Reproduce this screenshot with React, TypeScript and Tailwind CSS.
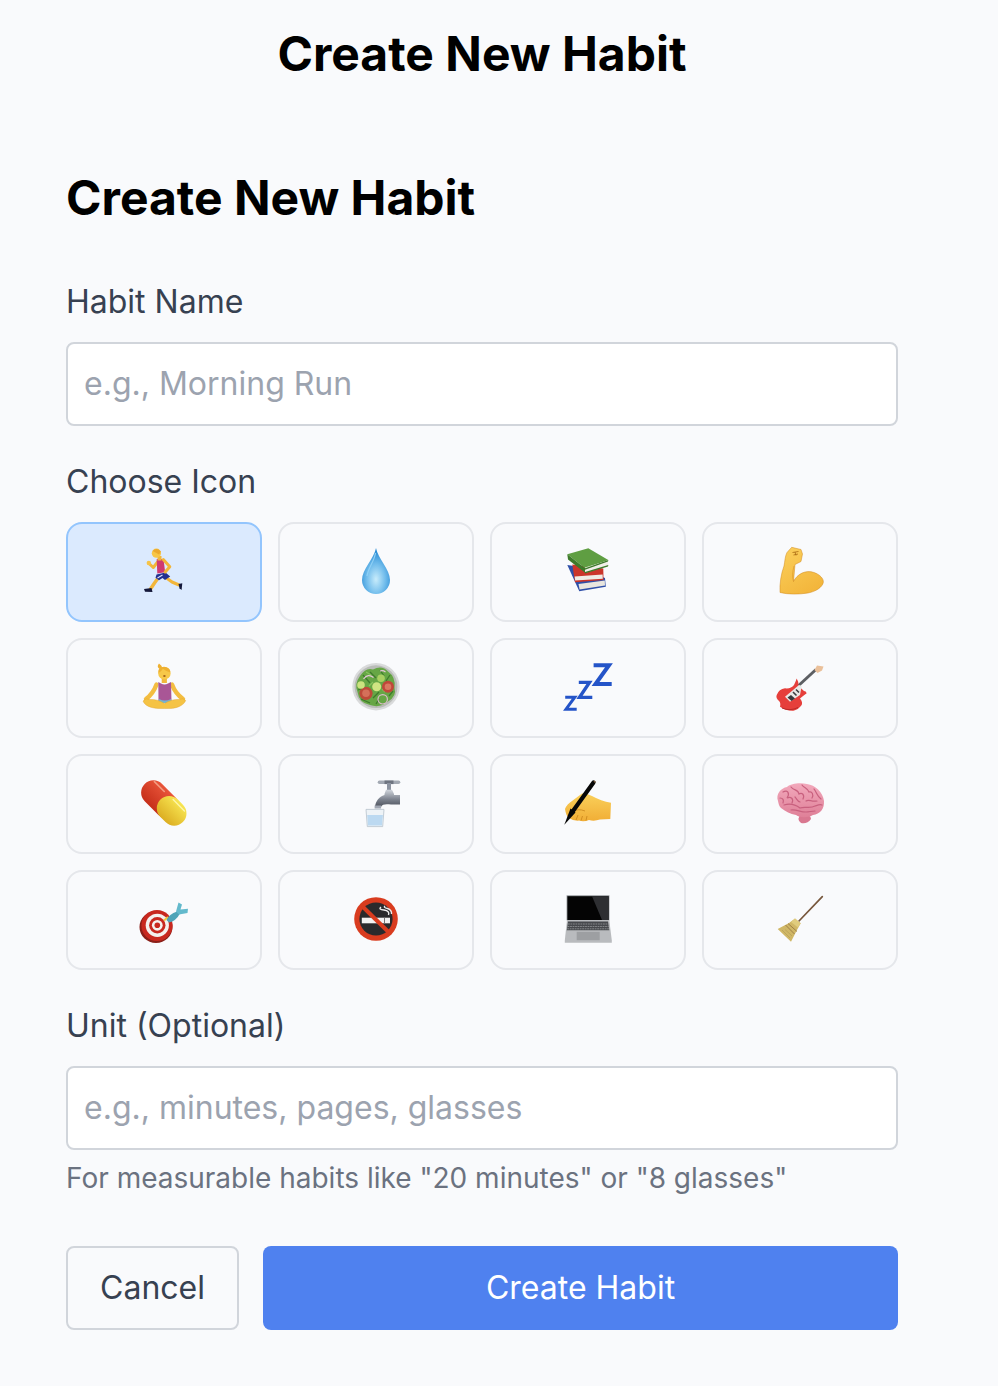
import type { ReactNode } from "react";

const Runner = (
  <>
    <path d="M24 19.5 L19.3 25.5 L15 21.5" fill="none" stroke="#f2b63a" strokeWidth="3" strokeLinecap="round" strokeLinejoin="round" />
    <circle cx="14.8" cy="21" r="2.2" fill="#f6c449" />
    <path d="M24.5 35.5 L20.5 41 L16.5 47" fill="none" stroke="#f2b63a" strokeWidth="3.4" strokeLinecap="round" strokeLinejoin="round" />
    <path d="M32.5 36 L38 40 L45 43" fill="none" stroke="#f2b63a" strokeWidth="3" strokeLinecap="round" strokeLinejoin="round" />
    <path d="M10 47 L17.5 46 L18.5 50 L11 49.8 Z" fill="#14183a" />
    <path d="M44.5 42 L48.3 41.2 L47.6 48 L45.5 46.2 Z" fill="#14183a" />
    <path d="M22.7 17 L29.5 17 L31.2 30.3 L23.3 31.5 Z" fill="#cf3a70" />
    <path d="M22.5 32.5 L31.5 30.5 L36.2 34.6 L31 38 L28.5 36 L25 38.2 L21.5 35.8 Z" fill="#23308f" />
    <path d="M23.5 36 L28.5 33" stroke="#dfe6ff" strokeWidth="1.1" />
    <path d="M29.3 17.5 L35.8 24.7 L31.2 30" fill="none" stroke="#f2b63a" strokeWidth="3" strokeLinecap="round" strokeLinejoin="round" />
    <rect x="23.5" y="14" width="4" height="4.5" fill="#f2b63a" />
    <circle cx="22.4" cy="11.2" r="4.6" fill="#f7c646" />
    <path d="M18.5 9 Q22.5 5 27 9.5 L25 12.5 L21.5 10.5 Z" fill="#eba92d" />
  </>
);

const Drop = (
  <>
    <defs>
      <radialGradient id="dropFill" cx="50%" cy="68%" r="60%">
        <stop offset="0%" stopColor="#c8ecfb" />
        <stop offset="55%" stopColor="#72bdec" />
        <stop offset="100%" stopColor="#2f8fd6" />
      </radialGradient>
    </defs>
    <path d="M30 6 C32 17 44 27 44 38 A14 14 0 0 1 16 38 C16 27 28 17 30 6 Z" fill="url(#dropFill)" />
    <path d="M29.5 11 C28.5 19 22 26 21 34" fill="none" stroke="#8fd0f5" strokeWidth="1.2" />
  </>
);

const Books = (
  <>
    <path d="M9.3 23 L16 24 L47 36 L47.8 44.8 L21.3 49.3 Z" fill="#2f4fa8" />
    <path d="M20.5 42 L46.8 38.5 L47 43.6 L21.6 47.4 Z" fill="#e9e6df" />
    <path d="M14.3 22.5 L45.3 26.5 L45.5 38 L17 40.2 Z" fill="#cb352a" />
    <path d="M16.6 34.5 L44.6 32.5 L44.8 36.8 L17.2 38.6 Z" fill="#efece5" />
    <path d="M9.3 12.3 L30.3 6.3 L50.3 18 L27 26.3 Z" fill="#5f9e42" />
    <path d="M27 25.5 L50 18.5 L50.3 23.7 L27 31 Z" fill="#f1efe8" />
    <path d="M9.3 12.3 L27 26.3 L27 30.8 L10 17.5 Z" fill="#3d7a2a" />
    <path d="M27 26.3 L50.3 18 L50 19.5 L27 27.8 Z" fill="#3d7a2a" />
    <path d="M27 30 L50.3 23 L50 24.5 L27 31.4 Z" fill="#3d7a2a" />
  </>
);

const Bicep = (
  <>
    <defs>
      <linearGradient id="armFill" x1="0" y1="0" x2="0.6" y2="1">
        <stop offset="0%" stopColor="#fbd05c" />
        <stop offset="100%" stopColor="#f3b63c" />
      </linearGradient>
    </defs>
    <path
      d="M21.7 5.3 L31 7.5 L32.5 12 L31 19.5 L25 22.5 L23.5 39.5 C27 32 36 27.5 44 30.5 C50 32.5 54 37 53.3 40.5 C52.5 45 46 49.5 38 51 C29 52.5 18 52.5 10 50.5 C9.5 42 11 32 14 24 C15 19 15 14 17 10.5 Z"
      fill="url(#armFill)"
      stroke="#d0881c"
      strokeWidth="0.5"
    />
    <path d="M22.5 10.5 L28.5 9.5 M23.5 13 L28 12 M25 10 L26 13.5" stroke="#a96a12" strokeWidth="0.8" fill="none" />
    <path d="M24 24 Q21.5 33 23.5 39.5" fill="none" stroke="#dc9a28" strokeWidth="0.7" />
  </>
);

const Meditate = (
  <>
    <path d="M22.5 26.5 C20.5 32 17.5 37 12 41" fill="none" stroke="#f3bd41" strokeWidth="4.4" strokeLinecap="round" />
    <path d="M38 26.5 C40 32 43.5 37 49 41" fill="none" stroke="#f3bd41" strokeWidth="4.4" strokeLinecap="round" />
    <path d="M24.3 24 L27 25.5 Q30.5 27.5 34 25.5 L37 24 L37.5 43.5 L24.5 43.5 Z" fill="#a95696" />
    <path d="M25 41 Q31 44 37 41 L38 45 L24 45 Z" fill="#74b6d0" />
    <path d="M9 43 Q12 39.5 16 41.5 C20 41 26 42.5 30.5 45.5 C35 42.5 41 41 45 41.5 Q49 39.5 51.7 42.5 C50 47 44 50 37 50.4 C33 50.6 28 50.6 24 50.4 C17 50 11 48 9 43 Z" fill="#f5c345" stroke="#dd9f28" strokeWidth="0.4" />
    <rect x="27.7" y="18" width="5.2" height="7" fill="#f0b83c" />
    <circle cx="30.4" cy="15.4" r="6.2" fill="#f7c849" />
    <path d="M24.4 15 Q23.6 8.8 30 8.8 Q36.4 9.2 36.4 14.5 Q31.5 13 28.8 10.8 Q27.5 13.8 24.4 15 Z" fill="#eeb031" />
    <path d="M26 11 Q22 9 25 5.5 Q28 7.5 28 10 Z" fill="#eeb031" />
    <ellipse cx="30.4" cy="18" rx="1.3" ry="1.1" fill="#a5651c" />
  </>
);

const Salad = (
  <>
    <circle cx="30" cy="28.7" r="23.7" fill="#d9dadb" />
    <circle cx="30" cy="28.7" r="21.4" fill="#b9bcb8" />
    <path d="M14 18 Q20 9 27 11.5 Q36 6.5 42 13.5 Q50 19 48.5 30 Q51 38 42 43.5 Q34 50.5 24 47 Q13 45 11.5 34 Q8 26 14 18 Z" fill="#66a645" />
    <path d="M17 17 L24 25 M34 12 L38 18 M15 41 L24 45 M43 38 L47 33 M27 40 L33 34 M30 20 L24 14 M12 32 L17 30 M44 17 L40 23 M30 46 L33 41" stroke="#3e7a2d" strokeWidth="1.3" />
    <path d="M20 14 L25 17 M39 34 L36 31 M27 24 L23 28" stroke="#88c45f" strokeWidth="1.2" />
    <circle cx="20" cy="35.3" r="6.6" fill="#bd4a39" />
    <circle cx="20" cy="35.3" r="3.8" fill="#d4705a" />
    <circle cx="42" cy="28.7" r="6" fill="#c0483a" />
    <circle cx="42" cy="28.7" r="3.3" fill="#da7860" />
    <circle cx="15" cy="27" r="3.8" fill="#cbe27f" />
    <circle cx="30.7" cy="28.7" r="4.5" fill="#d0e583" />
    <circle cx="35" cy="20.3" r="3.8" fill="#a8cf62" />
    <circle cx="36.7" cy="41.3" r="4.7" fill="none" stroke="#dbbccb" strokeWidth="1.2" />
    <path d="M17.5 21 Q22 15 27.5 19.5" fill="none" stroke="#e4c6d6" strokeWidth="1.2" />
    <path d="M34 13 Q37 12 39.5 14" fill="none" stroke="#e4c6d6" strokeWidth="1.1" />
  </>
);

const Zzz = (
  <g fill="none" stroke="#2454c8" strokeWidth="4" strokeLinejoin="miter">
    <path d="M35.6 7.2 H51 L37.5 26 H53.7" />
    <path d="M20.8 24.4 H31.5 L21.5 39.4 H34.3" strokeWidth="3.4" />
    <path d="M7.2 39.2 H16.8 L8 51.2 H18.7" strokeWidth="3" />
  </g>
);

const Guitar = (
  <>
    <path d="M27 29 L46 11.5" stroke="#5d5f63" strokeWidth="3" />
    <path d="M44.5 12 L47 7.5 L53.5 8.5 L52 12.5 L47.5 15 Z" fill="#eac09a" />
    <path d="M26.7 20.5 Q29 24 28.5 28 L34 33 Q36 33 36.7 35.3 Q33 38 30 40.5 Q33 44 31.7 47 Q28 52 23.3 52.7 Q16 53 10 48.7 Q11 45 9 43 Q5.5 40 6.7 37 Q9 31 15 30.3 Q21 31 24 27 Q25.5 24 26.7 20.5 Z" fill="#e63f3b" />
    <path d="M15 38.7 L29 27 L31.7 28 L30 37 L20 43.7 Z" fill="#e9e9e6" />
    <path d="M17.5 39.5 L21.5 43 L25 40.5 L21 37 Z" fill="#38393c" />
    <path d="M23 34 L26.5 37.5 M26 31.5 L29 34.5" stroke="#3c3d40" strokeWidth="1.6" />
    <path d="M12 50 Q20 53.5 28 49.5" fill="none" stroke="#b92a28" strokeWidth="1" />
  </>
);

const Pill = (
  <>
    <defs>
      <linearGradient id="pillRed" x1="0" y1="0" x2="0" y2="1">
        <stop offset="0%" stopColor="#e9553a" />
        <stop offset="100%" stopColor="#c62f1a" />
      </linearGradient>
      <linearGradient id="pillYellow" x1="0" y1="0" x2="0" y2="1">
        <stop offset="0%" stopColor="#f8e652" />
        <stop offset="100%" stopColor="#dcae22" />
      </linearGradient>
    </defs>
    <g transform="rotate(45 29.8 29)">
      <rect x="2.8" y="16.7" width="44" height="24.6" rx="12.3" fill="url(#pillRed)" />
      <rect x="25" y="16.7" width="31.8" height="24.6" rx="12.3" fill="url(#pillYellow)" />
      <path d="M8 20.5 H22" stroke="#f29a80" strokeWidth="1.6" strokeLinecap="round" />
      <path d="M34 20 H50" stroke="#fdf6a8" strokeWidth="1.4" strokeLinecap="round" />
    </g>
  </>
);

const Faucet = (
  <>
    <defs>
      <linearGradient id="tapFill" x1="0" y1="0" x2="0" y2="1">
        <stop offset="0%" stopColor="#d0d5dc" />
        <stop offset="55%" stopColor="#7d838f" />
        <stop offset="100%" stopColor="#4d525c" />
      </linearGradient>
    </defs>
    <path d="M33.5 8.3 H52.5" stroke="#a3a9b3" strokeWidth="3.6" strokeLinecap="round" />
    <path d="M38.5 8.3 H47.5" stroke="#6e7480" strokeWidth="3.6" />
    <rect x="41" y="9" width="4" height="7.5" fill="#8c93a0" />
    <path d="M38.5 20 L40 15.8 H46 L48 20 V21 H54 V30.5 H45 C40 30 36 30 35 33 H29 C29.5 27.5 33 22.5 38.5 21 Z" fill="url(#tapFill)" />
    <rect x="28.6" y="31.5" width="6.5" height="3" fill="#a0a6b2" />
    <path d="M20 35.4 H38 L36.7 52.6 H21.3 Z" fill="#eef3f7" stroke="#b6c1cc" strokeWidth="0.8" />
    <path d="M21.2 41 H36.9 L36 51.6 H22 Z" fill="#bcd9f1" />
  </>
);

const WritingHand = (
  <>
    <defs>
      <linearGradient id="handFill" x1="0" y1="0" x2="0" y2="1">
        <stop offset="0%" stopColor="#fad05a" />
        <stop offset="100%" stopColor="#f1ae36" />
      </linearGradient>
    </defs>
    <path d="M7 35 Q9 30 14 27 L24 19.5 Q29 19 34 22 Q43 27 53 28.7 L52.3 45 Q47 45 42 45.6 Q36 47.5 31 46 Q26 48 21 46.6 Q15 47 11 44 Q8 42 7 35 Z" fill="url(#handFill)" />
    <path d="M14 38 Q20 34 27 37 M18 46 L20 41 M23 46.5 L24.5 42 M28 46.5 L29 42" fill="none" stroke="#c9851a" strokeWidth="0.8" />
    <path d="M35.5 8.5 L15 37" stroke="#070707" strokeWidth="4.2" strokeLinecap="round" />
    <path d="M12.5 34.5 L17.5 38.5 L6.3 50.7 Z" fill="#070707" />
    <path d="M36 7 L37.5 8.5" stroke="#7b5b3a" strokeWidth="1.4" />
  </>
);

const Brain = (
  <>
    <defs>
      <linearGradient id="brainFill" x1="0" y1="0" x2="0" y2="1">
        <stop offset="0%" stopColor="#f2a9bc" />
        <stop offset="100%" stopColor="#df8098" />
      </linearGradient>
    </defs>
    <path d="M31 40 Q41 40 41 45 Q37 50.5 31 49 Q26 45 31 40 Z" fill="#d97790" />
    <path d="M8 27 C5.5 20 11 14 17 13 C21 9 31 8.5 37 10 C45 11 53 18 54 27 C54.5 35 50 40 43 41 C38 44 30 44 26 41 C20 40 16 37.5 11 34 C9 32 8.5 29.5 8 27 Z" fill="url(#brainFill)" />
    <g fill="none" stroke="#c8607e" strokeWidth="1.2" strokeLinecap="round">
      <path d="M13 18 C18 15 20 20 17 24 C21 22 24 25 22 29" />
      <path d="M21 13 C24 17 28 15 29 20 C32 18 35 21 33 25" />
      <path d="M32 11 C34 14 38 14 39 18 C42 17 44 21 42 24" />
      <path d="M44 15 C47 19 47 22 51 25" />
      <path d="M14 31 C20 29 26 31 30 34 C35 32 40 35 45 32 C48 31 50 30 52 31" />
      <path d="M21 36 C26 35 30 38 36 38 C39 38 42 37 45 37" />
      <path d="M10 24 C13 24 14 26 13 29" />
      <path d="M36 27 C39 25 41 28 47 27" />
      <path d="M25 23 C27 25 27 27 30 28" />
    </g>
  </>
);

const Target = (
  <>
    <ellipse cx="22" cy="37" rx="16.5" ry="16" fill="#8a1f18" />
    <circle cx="23" cy="35.5" r="15.6" fill="#c8281f" />
    <circle cx="23.3" cy="35.3" r="11.6" fill="#f4f1ee" />
    <circle cx="23.3" cy="35.3" r="8.2" fill="#c8281f" />
    <circle cx="23.3" cy="35.3" r="5.4" fill="#f4f1ee" />
    <circle cx="23.3" cy="35.3" r="2.8" fill="#c8281f" />
    <path d="M30 30.5 L34 27" stroke="#f0c93c" strokeWidth="2" />
    <path d="M32.5 30 Q35 24 43 21.5 L46 23.5 Q42 31 35 32.5 Z" fill="#4ea4b8" />
    <path d="M42 21.5 L44.5 12.5 L48 14.5 L46.5 19.5 L54 18.8 L53.5 23 L45 24.5 Z" fill="#63b9cc" />
  </>
);

const NoSmoking = (
  <>
    <circle cx="30" cy="29" r="21.8" fill="#d93c1f" />
    <circle cx="30" cy="29" r="16.6" fill="#2a2a2c" />
    <rect x="15.8" y="27.7" width="28.2" height="5.6" fill="#f2f2f2" />
    <rect x="38" y="27.7" width="1" height="5.6" fill="#777" />
    <path d="M35 17 Q32 19.5 38 20 Q44 21 42.5 25 M39 16 Q37 17.5 41.5 18.5 Q46 20 45.5 24" fill="none" stroke="#ededed" strokeWidth="1.4" />
    <path d="M16 16 L43.5 43" stroke="#d93c1f" strokeWidth="4" />
  </>
);

const Laptop = (
  <>
    <rect x="8.6" y="5.3" width="42.8" height="25" fill="#8f9296" />
    <rect x="9.4" y="6.2" width="41.2" height="24" fill="#040404" />
    <path d="M34 6.2 H50.6 V30 H44 Z" fill="#2e2f32" />
    <path d="M9 30 H51.3 L53.8 50.5 V52.7 H6.8 V50.5 Z" fill="#b9bbbe" />
    <path d="M10 31.5 H50 L51.3 40.2 H8.8 Z" fill="#47494d" />
    <path d="M10 34 H50.3 M9.6 36.5 H50.7 M9.2 38.8 H51" stroke="#c0c2c5" strokeWidth="0.5" strokeDasharray="1.8 0.7" />
    <rect x="18.7" y="41.8" width="23" height="8.4" fill="#9d9fa2" />
  </>
);

const Broom = (
  <>
    <path d="M52.3 6.7 L29 31" stroke="#77573c" strokeWidth="1.7" strokeLinecap="round" />
    <path d="M25 28.5 L30.7 33.2 L27.5 39 L21 51.7 L7.7 39 L19 33 Z" fill="#d0b766" />
    <path d="M25 28.5 L30.7 33.2 L28 37.5 L21 32 Z" fill="#e0cc7e" />
    <path d="M18 33.5 L27 41.5 M15.5 35 L24.5 44" stroke="#a08048" strokeWidth="1" />
    <path d="M12 40 L20 48 M15 39.5 L22 46" stroke="#a89250" strokeWidth="0.5" />
  </>
);

const icons: ReactNode[] = [
  Runner, Drop, Books, Bicep,
  Meditate, Salad, Zzz, Guitar,
  Pill, Faucet, WritingHand, Brain,
  Target, NoSmoking, Laptop, Broom,
];

function Field({ label, placeholder }: { label: string; placeholder: string }) {
  return (
    <div>
      <label className="mb-[20px] block text-[32px] font-normal leading-[40px] text-[#374151]">{label}</label>
      <input
        type="text"
        placeholder={placeholder}
        className="block h-[84px] w-full rounded-[8px] border-2 border-[#d1d5db] bg-white px-[16px] pb-[2px] text-[32px] text-[#111827] outline-none placeholder:text-[#9ca3af]"
      />
    </div>
  );
}

export default function App() {
  return (
    <div className="min-h-[1386px] w-full bg-[#f9fafc] font-['Inter',sans-serif]">
      <div className="w-[964px]">
        <h1 className="pt-[25px] text-center text-[48px] font-bold leading-[58px] text-black">Create New Habit</h1>

        <div className="px-[66px]">
          <h2 className="mt-[86px] text-[48px] font-bold leading-[58px] text-black">Create New Habit</h2>

          <div className="mt-[55px]">
            <Field label="Habit Name" placeholder="e.g., Morning Run" />
          </div>

          <div className="mt-[36px]">
            <p className="mb-[20px] text-[32px] font-normal leading-[40px] text-[#374151]">Choose Icon</p>
            <div className="grid grid-cols-4 gap-[16px]">
              {icons.map((icon, i) => (
                <button
                  key={i}
                  type="button"
                  className={
                    i === 0
                      ? "flex h-[100px] items-center justify-center rounded-[16px] border-2 border-[#93c5fd] bg-[#dbeafe]"
                      : "flex h-[100px] items-center justify-center rounded-[16px] border-2 border-[#e5e7eb] bg-[#f9fafc]"
                  }
                >
                  <svg viewBox="0 0 60 60" className="h-[60px] w-[60px]">
                    {icon}
                  </svg>
                </button>
              ))}
            </div>
          </div>

          <div className="mt-[36px]">
            <Field label="Unit (Optional)" placeholder="e.g., minutes, pages, glasses" />
            <p className="mt-[8px] text-[28px] leading-[40px] text-[#6b7280]">
              For measurable habits like "20 minutes" or "8 glasses"
            </p>
          </div>

          <div className="mt-[48px] flex gap-[24px]">
            <button
              type="button"
              className="h-[84px] w-[173px] rounded-[8px] border-2 border-[#d1d5db] text-[32px] font-normal text-[#374151]"
            >
              Cancel
            </button>
            <button
              type="button"
              className="h-[84px] flex-1 rounded-[8px] bg-[#4f81ef] text-[32px] font-normal text-white"
            >
              Create Habit
            </button>
          </div>
        </div>
      </div>
    </div>
  );
}
